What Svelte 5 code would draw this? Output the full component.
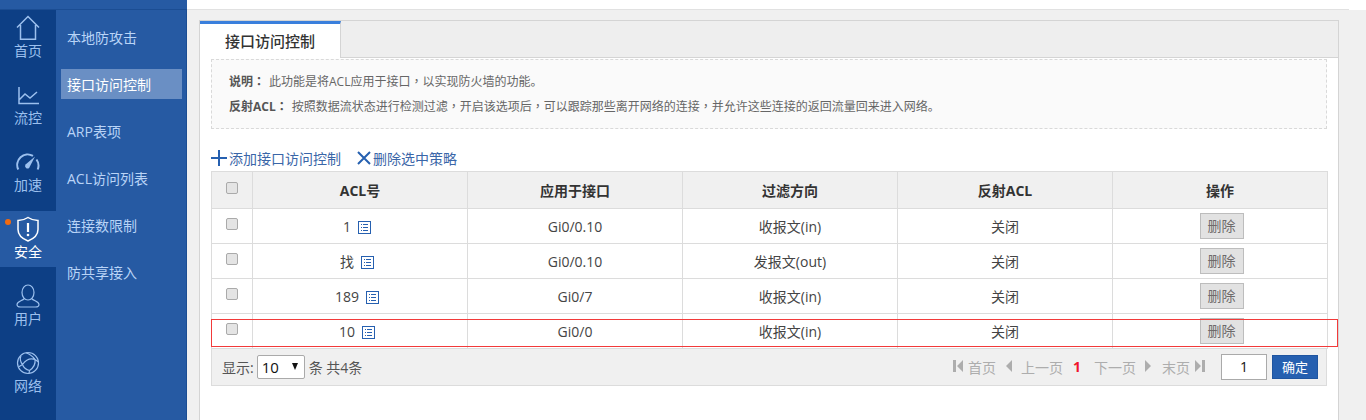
<script>
  const secondary = ['本地防攻击', '接口访问控制', 'ARP表项', 'ACL访问列表', '连接数限制', '防共享接入'];
  const rows = [
    { acl: '1', port: 'Gi0/0.10', dir: '收报文(in)' },
    { acl: '找', port: 'Gi0/0.10', dir: '发报文(out)' },
    { acl: '189', port: 'Gi0/7', dir: '收报文(in)' },
    { acl: '10', port: 'Gi0/0', dir: '收报文(in)' }
  ];
</script>

<div class="page">
  <div class="topbar"><div class="topblue"></div><div class="topwhite"></div></div>
  <div class="body">
    <nav class="rail">
      <div class="railitem">
        <svg width="24" height="26" viewBox="0 0 24 26" fill="none" stroke="currentColor" stroke-width="1.5"><path d="M1 12.5 12 1.500l11 11M4.500 10v14.200h15V10"/></svg>
        <span>首页</span>
      </div>
      <div class="railitem">
        <svg width="24" height="26" viewBox="0 0 24 26" fill="none" stroke="currentColor" stroke-width="1.5"><path d="M3 5v16.500h20M3 18l6-6 5 4 7-6"/></svg>
        <span>流控</span>
      </div>
      <div class="railitem">
        <svg width="24" height="26" viewBox="0 0 24 26" fill="none" stroke="currentColor" stroke-width="2"><path d="M2.300 20.500A10.500 10.500 0 0 1 17 6.800M20.500 10.500A10.500 10.500 0 0 1 21.700 20.500" /><path d="M19 7.500 9.500 15.500a2.600 2.600 0 0 0 3.600 3.600z" fill="currentColor" stroke="none"/></svg>
        <span>加速</span>
      </div>
      <div class="railitem active">
        <i class="dot"></i>
        <svg width="24" height="26" viewBox="0 0 24 26" fill="none" stroke="currentColor" stroke-width="1.500"><path d="M12 1.500c3 2 6 3 10 3v9c0 6-5 9.500-10 11.500-5-2-10-5.500-10-11.500v-9c4 0 7-1 10-3z"/><path d="M12 7v9" stroke-width="2.200"/><circle cx="12" cy="19" r="1.300" fill="currentColor" stroke="none"/></svg>
        <span>安全</span>
      </div>
      <div class="railitem">
        <svg width="24" height="26" viewBox="0 0 24 26" fill="none" stroke="currentColor" stroke-width="1.200"><ellipse cx="12" cy="9.500" rx="6" ry="7.500"/><path d="M8.500 15.500C6 18 1 18.500 1 21.500 1 23.500 2.500 24 4.500 24h15c2 0 3.500-.5 3.500-2.500 0-3-5-3.500-7.500-6"/></svg>
        <span>用户</span>
      </div>
      <div class="railitem">
        <svg width="24" height="26" viewBox="0 0 24 26" fill="none" stroke="currentColor" stroke-width="1.200"><circle cx="12" cy="13" r="10.500"/><path d="M6.500 14.500Q12 7 19 9.500 20 16 13.500 20.500 8 19 6.500 14.500zM6.500 14.500Q3 10 5 6M6.500 14.500 2.500 17M19 9.500Q16 5 10 2.700M19 9.500 22.500 12M13.500 20.500 13 23.500"/></svg>
        <span>网络</span>
      </div>
    </nav>

    <aside class="sub">
      {#each secondary as item, i}
        <div class="subitem" class:on={i === 1}>{item}</div>
      {/each}
    </aside>

    <main class="content">
      <section class="panel">
        <div class="tabs"><div class="tab">接口访问控制</div></div>
        <div class="inner">
          <div class="note">
            <p><b>说明<span class="pu">：</span></b>此功能是将ACL应用于接口<span class="pu">，</span>以实现防火墙的功能。</p>
            <p><b>反射ACL<span class="pu">：</span></b>按照数据流状态进行检测过滤<span class="pu">，</span>开启该选项后<span class="pu">，</span>可以跟踪那些离开网络的连接<span class="pu">，</span>并允许这些连接的返回流量回来进入网络。</p>
          </div>
          <div class="actions">
            <span class="act">
              <svg width="16" height="16" viewBox="0 0 16 16" stroke="#2660b0" stroke-width="2"><path d="M0 8h16M8 0v16"/></svg>添加接口访问控制
            </span>
            <span class="act second">
              <svg width="14" height="14" viewBox="0 0 14 14" stroke="#2660b0" stroke-width="2"><path d="M1 1l12 12M13 1 1 13"/></svg>删除选中策略
            </span>
          </div>

          <div class="tablewrap">
            <table>
              <colgroup>
                <col class="c0" /><col class="c" /><col class="c" /><col class="c" /><col class="c" /><col class="c" />
              </colgroup>
              <thead>
                <tr>
                  <th><span class="cb"></span></th>
                  <th>ACL号</th><th>应用于接口</th><th>过滤方向</th><th>反射ACL</th><th>操作</th>
                </tr>
              </thead>
              <tbody>
                {#each rows as r}
                  <tr>
                    <td><span class="cb"></span></td>
                    <td>{r.acl}<svg class="list" width="13" height="13" viewBox="0 0 13 13" fill="none" stroke="#2660b0"><rect x=".5" y=".5" width="12" height="12"/><path d="M3 3.500h1M5 3.500h5M3 6.500h1M5 6.500h5M3 9.500h1M5 9.500h5"/></svg></td>
                    <td>{r.port}</td>
                    <td>{r.dir}</td>
                    <td>关闭</td>
                    <td><span class="del">删除</span></td>
                  </tr>
                {/each}
              </tbody>
            </table>
            <div class="highlight"></div>
            <div class="pager">
              <div class="left">
                <span>显示:</span>
                <span class="select">10<i></i></span>
                <span>条 共4条</span>
              </div>
              <div class="right">
                <svg class="ic" width="10" height="12" viewBox="0 0 10 12" fill="#adadad"><path d="M0 0h3v12H0zM10 0v12L4 6z"/></svg>
                <span class="pg first">首页</span>
                <svg class="ic prev" width="6" height="12" viewBox="0 0 6 12" fill="#adadad"><path d="M6 0v12L0 6z"/></svg>
                <span class="pg prevt">上一页</span>
                <b class="cur">1</b>
                <span class="pg">下一页</span>
                <svg class="ic next" width="6" height="12" viewBox="0 0 6 12" fill="#adadad"><path d="M0 0v12l6-6z"/></svg>
                <span class="pg last">末页</span>
                <svg class="ic end" width="10" height="12" viewBox="0 0 10 12" fill="#adadad"><path d="M0 0v12l6-6zM7 0h3v12H7z"/></svg>
                <span class="jump">1</span>
                <span class="ok">确定</span>
              </div>
            </div>
          </div>
        </div>
      </section>
    </main>
    <div class="gutter"></div>
  </div>
</div>

<style>
  :global(body) {
    margin: 0;
    background: #fff;
    overflow: hidden;
  }
  .page {
    width: 1366px;
    height: 420px;
    overflow: hidden;
    font-family: "Open Sans", "Noto Sans CJK SC", sans-serif;
    font-size: 14px;
    color: #444;
    display: flex;
    flex-direction: column;
  }
  .topbar {
    display: flex;
    height: 10px;
    flex: none;
  }
  .topblue {
    width: 187px;
    background: #265aa3;
    border-bottom: 1px solid #1b4d93;
    box-sizing: border-box;
  }
  .topwhite {
    width: 1162px;
    background: #fff;
    border-bottom: 1px solid #e1e1e1;
    box-sizing: border-box;
  }
  .body {
    display: flex;
    flex: 1;
    min-height: 0;
  }
  .rail {
    width: 56px;
    flex: none;
    background: #0d3f85;
    display: flex;
    flex-direction: column;
    gap: 11px;
  }
  .railitem {
    position: relative;
    height: 56px;
    display: flex;
    flex-direction: column;
    align-items: center;
    box-sizing: border-box;
    padding-top: 5px;
    color: #9cc0ee;
  }
  .railitem span {
    font-size: 14px;
    line-height: 20px;
  }
  .railitem svg {
    display: block;
  }
  .railitem.active {
    background: #265aa3;
    color: #fff;
  }
  .dot {
    position: absolute;
    left: 5px;
    top: 8px;
    width: 6px;
    height: 6px;
    border-radius: 50%;
    background: #f26a0f;
  }
  .sub {
    width: 131px;
    flex: none;
    box-sizing: border-box;
    background: #265aa3;
    border-right: 1px solid #1b4d93;
    padding: 12px 4px 0 5px;
    display: flex;
    flex-direction: column;
    gap: 17px;
  }
  .subitem {
    height: 30px;
    line-height: 32px;
    padding-left: 6px;
    color: #b9d4f7;
    font-size: 14px;
  }
  .subitem.on {
    background: #6a8fc4;
    color: #fff;
  }
  .content {
    width: 1162px;
    flex: none;
    background: #f0f0f0;
    padding: 10px 10px 0 12px;
    box-sizing: border-box;
  }
  .panel {
    width: 1140px;
    height: 430px;
    box-sizing: border-box;
    background: #fff;
    border: 1px solid #d4d4d4;
  }
  .tabs {
    height: 37px;
    box-sizing: border-box;
    background: #eee;
    border-bottom: 1px solid #d4d4d4;
  }
  .tab {
    width: 141px;
    height: 37px;
    box-sizing: border-box;
    border-top: 3px solid #3a7fdc;
    border-right: 1px solid #d4d4d4;
    background: #fff;
    text-align: center;
    line-height: 35px;
    font-weight: 500;
    color: #333;
    font-size: 15px;
  }
  .inner {
    padding: 1px 11px 0;
  }
  .note {
    width: 1116px;
    height: 70px;
    box-sizing: border-box;
    border: 1px dashed #d9d9d9;
    background: #fafafa;
    padding: 11px 17px;
    font-size: 12px;
    color: #666;
  }
  .note p {
    margin: 0 0 4px;
    line-height: 20px;
  }
  .note b {
    color: #555;
    margin-right: 4px;
  }
  .pu {
    font-family: "Noto Sans CJK TC", sans-serif;
  }
  .actions {
    display: flex;
    height: 30px;
    margin-top: 14px;
    align-items: center;
    color: #3a66a8;
    font-size: 14px;
  }
  .act {
    display: flex;
    align-items: center;
    gap: 2px;
  }
  .second {
    margin-left: 16px;
  }
  .tablewrap {
    position: relative;
    width: 1116px;
    margin-top: -2px;
  }
  table {
    width: 1116px;
    border-collapse: collapse;
    table-layout: fixed;
  }
  .c0 {
    width: 41px;
  }
  .c {
    width: 215px;
  }
  th, td {
    border: 1px solid #dcdcdc;
    text-align: center;
    padding: 0;
    font-size: 14px;
  }
  th {
    height: 36px;
    background: #f0f0f0;
    color: #333;
    font-weight: 700;
    font-size: 14px;
  }
  td {
    height: 34px;
    color: #444;
    position: relative;
  }
  .cb {
    display: inline-block;
    width: 10px;
    height: 10px;
    border: 1px solid #aaa;
    border-radius: 2px;
    background: #e4e4e4;
    vertical-align: 2px;
  }
  .list {
    margin-left: 7px;
    margin-right: 6px;
    vertical-align: -2px;
  }
  .del {
    display: inline-block;
    width: 44px;
    height: 26px;
    margin-left: 3px;
    box-sizing: border-box;
    line-height: 24px;
    border: 1px solid #bdbdbd;
    background: #e2e2e2;
    color: #6e6a6a;
    font-size: 14px;
  }
  .highlight {
    position: absolute;
    left: 0;
    top: 148px;
    width: 1127px;
    height: 28px;
    box-sizing: border-box;
    border: 1px solid #f23a3a;
    pointer-events: none;
  }
  .pager {
    height: 37px;
    box-sizing: border-box;
    background: #f0f0f0;
    border: 1px solid #dcdcdc;
    border-top: 0;
    display: flex;
    align-items: center;
    justify-content: space-between;
    padding: 0 8px 0 10px;
    font-size: 14px;
    color: #555;
  }
  .left, .right {
    display: flex;
    align-items: center;
  }
  .select {
    position: relative;
    display: inline-block;
    width: 48px;
    height: 24px;
    box-sizing: border-box;
    border: 1px solid #aaa;
    border-radius: 2px;
    background: #fff;
    color: #111;
    font-size: 15px;
    line-height: 22px;
    padding-left: 4px;
    margin: 0 4px 0 3px;
  }
  .select i {
    position: absolute;
    right: 6px;
    top: 7px;
    border: 3.5px solid transparent;
    border-top: 7px solid #111;
    border-bottom: 0;
  }
  .ic {
    flex: none;
    margin-top: -2px;
  }
  .pg {
    color: #adadad;
  }
  .first {
    margin-left: 5px;
  }
  .prev {
    margin-left: 10px;
  }
  .prevt {
    margin-left: 9px;
  }
  .cur {
    color: #f0142d;
    margin: -2px 13px 0 10px;
    font-size: 14px;
  }
  .next {
    margin-left: 9px;
  }
  .last {
    margin-left: 11px;
  }
  .end {
    margin-left: 5px;
  }
  .jump {
    width: 46px;
    height: 26px;
    box-sizing: border-box;
    border: 1px solid #aaa;
    background: #fff;
    text-align: center;
    line-height: 24px;
    color: #111;
    margin: 0 5px 0 16px;
  }
  .ok {
    width: 46px;
    height: 24px;
    box-sizing: border-box;
    line-height: 22px;
    background: #2660b0;
    border: 1px solid #1f55a0;
    color: #fff;
    text-align: center;
    font-size: 13px;
  }
  .gutter {
    flex: 1;
    background: #f0f0f0;
  }
</style>
